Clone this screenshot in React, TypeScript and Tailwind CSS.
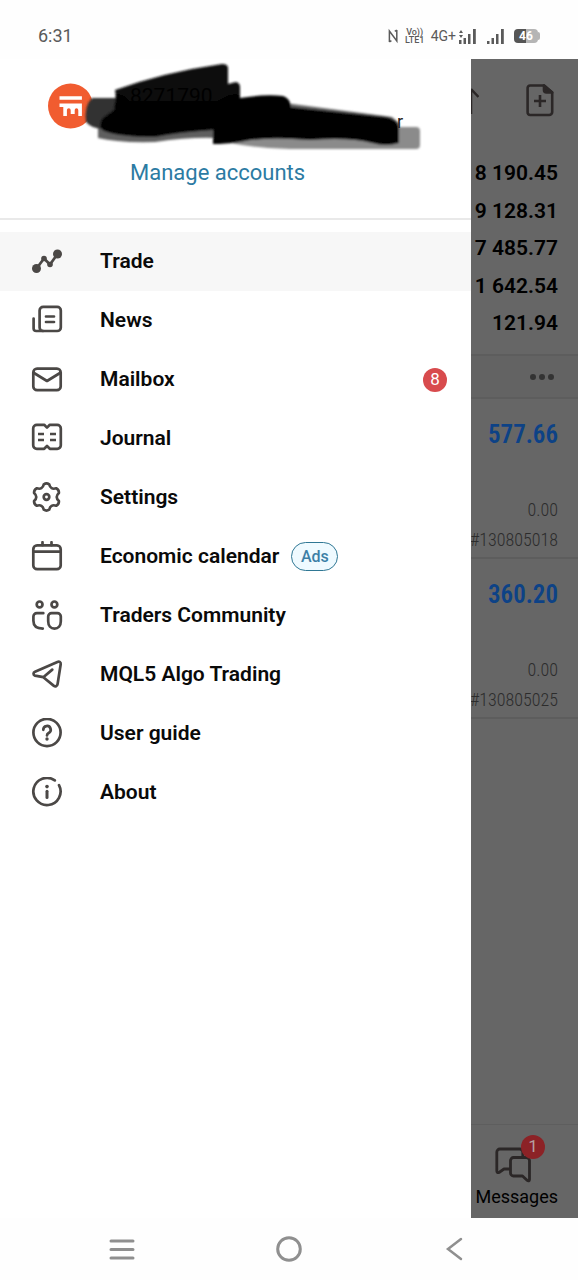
import type { ReactNode } from 'react';

const menu: { label: string; icon: ReactNode; ads?: boolean; badge?: number }[] = [
  {
    label: 'Trade',
    icon: (
      <>
        <path d="M5.5 22.5L13 12.5l6 6L26.5 8" />
        <g fill="currentColor" stroke="none">
          <circle cx="5.5" cy="22.5" r="4.5" />
          <circle cx="13" cy="12.5" r="2.8" />
          <circle cx="19" cy="18.5" r="2.8" />
          <circle cx="26.5" cy="8" r="4.5" />
        </g>
      </>
    ),
  },
  {
    label: 'News',
    icon: (
      <>
        <rect x="8.6" y="1.8" width="21.2" height="24.2" rx="3.6" />
        <path d="M2.6 13.5v10a2.6 2.6 0 0 0 2.6 2.5H12M15 11.5h8M15 17h8" />
      </>
    ),
  },
  {
    label: 'Mailbox',
    badge: 8,
    icon: (
      <>
        <rect x="2.3" y="4.6" width="27.4" height="21.6" rx="3.8" />
        <path d="M3 9l13 8 13-8" />
      </>
    ),
  },
  {
    label: 'Journal',
    icon: (
      <>
        <path d="M5.8 1.8h7.4L16 4.6l2.8-2.8h7.4a3.6 3.6 0 0 1 3.6 3.6v16.8a3.6 3.6 0 0 1-3.6 3.6h-7.4L16 23l-2.8 2.8H5.8a3.6 3.6 0 0 1-3.6-3.6V5.4a3.6 3.6 0 0 1 3.6-3.6z" />
        <path strokeLinecap="butt" d="M7 11h6M7 17h6M19 11h6M19 17h6" />
      </>
    ),
  },
  {
    label: 'Settings',
    icon: (
      <>
        <path d="M12.8 2.3Q15.5.5 18.2 2.3Q19.5 8.1 25.2 6.3Q28.1 7.7 27.9 11Q23.5 15 27.9 19Q28.1 22.3 25.2 23.7Q19.5 21.9 18.2 27.7Q15.5 29.5 12.8 27.7Q11.5 21.9 5.8 23.7Q2.9 22.3 3.1 19Q7.5 15 3.1 11Q2.9 7.7 5.8 6.3Q11.5 8.1 12.8 2.3z" />
        <circle cx="15.5" cy="15" r="2.8" />
      </>
    ),
  },
  {
    label: 'Economic calendar',
    ads: true,
    icon: (
      <>
        <rect x="2.3" y="4.4" width="27.4" height="23.8" rx="3.8" />
        <path d="M2.5 10.6h27M11.5 1.2v3M20.5 1.2v3" />
      </>
    ),
  },
  {
    label: 'Traders Community',
    icon: (
      <>
        <circle cx="8.6" cy="4.4" r="2.9" />
        <circle cx="23.4" cy="4.4" r="2.9" />
        <path d="M12.3 13.2H5.8a3.4 3.4 0 0 0-3.4 3.4v4.2c0 5 3.4 7.8 9.4 7.8" />
        <path d="M20.6 13.2h5.8a3.4 3.4 0 0 1 3.4 3.4v4.6c0 4.6-2.6 7.4-6.3 7.4s-6.3-2.8-6.3-7.4v-4.6a3.4 3.4 0 0 1 3.4-3.4z" />
      </>
    ),
  },
  {
    label: 'MQL5 Algo Trading',
    icon: (
      <path d="M12.3 18.2L4 16.6c-2-.6-2-2.9 0-3.8L26.4 2.9c2-.8 3.6.3 3.3 2.4L26.6 25c-.4 2.4-2.2 3-4 1.6l-10.3-8.4L21.3 10.6" />
    ),
  },
  {
    label: 'User guide',
    icon: (
      <>
        <circle cx="16" cy="14.5" r="13.6" />
        <path d="M12.3 11.8a3.7 3.7 0 1 1 5.4 3.2c-1.2.7-1.7 1.2-1.7 2.4" />
        <circle cx="16" cy="21" r="1.7" fill="currentColor" stroke="none" />
      </>
    ),
  },
  {
    label: 'About',
    icon: (
      <>
        <path d="M23.8 3.4A13.6 13.6 0 1 0 28 8.2" />
        <path d="M16 14.2v6.3" strokeWidth="3" />
        <circle cx="16" cy="9.6" r="1.8" fill="currentColor" stroke="none" />
      </>
    ),
  },
];

const summary = ['8 190.45', '9 128.31', '7 485.77', '1 642.54', '121.94'];

const positions = [
  { profit: '577.66', swap: '0.00', ticket: '#130805018' },
  { profit: '360.20', swap: '0.00', ticket: '#130805025' },
];

function StatusBar() {
  return (
    <div className="flex h-[59px] shrink-0 items-center justify-between px-[38px] pt-3 text-[#5a5a5a]">
      <span className="text-[18px]">6:31</span>
      <div className="flex items-center gap-[6px]">
        <svg className="h-4 w-[11px]" viewBox="0 0 11 16" fill="none" stroke="currentColor" strokeWidth="1.5">
          <path d="M1.4 14V3l7.400 10V2M1.400 14l2-1.400M8.800 2l-2 1.400" />
        </svg>
        <div className="w-[20px] text-center text-[9px] leading-[8px] font-medium">
          <div>Vo))</div>
          <div>LTE1</div>
        </div>
        <span className="text-[14px] leading-5">4G+</span>
        <svg className="-ml-1 h-4 w-[18px]" viewBox="0 0 18 16" fill="currentColor">
          <path d="M1 5l2-3 2 3zM1 7h4l-2 3zM1 12h2.500v4H1zM5.500 10H8v6H5.500zM10 6h2.500v10H10zM15 1h2.800v15H15z" />
        </svg>
        <svg className="ml-1 h-4 w-[18px]" viewBox="0 0 18 16" fill="currentColor">
          <path d="M1 13h2.500v3H1zM5.500 10H8v6H5.500zM10 6h2.500v10H10zM15 1h2.800v15H15z" />
        </svg>
        <div className="ml-1 flex items-center">
          <span className="flex h-[14px] w-6 items-center justify-center rounded-[4px] bg-linear-to-r from-[#555] from-50% to-[#b5b5b5] to-50% text-[12px] font-bold text-white">
            46
          </span>
          <span className="h-2 w-[2px] rounded-r bg-[#b5b5b5]" />
        </div>
      </div>
    </div>
  );
}

function AccountHeader() {
  return (
    <header className="relative h-[161px] border-b-2 border-[#e9e9e9] pt-6 pl-12">
      <div className="flex">
        <svg className="h-[46px] w-[46px] shrink-0" viewBox="0 0 46 46">
          <circle cx="22.500" cy="23" r="22.500" fill="#f15c30" />
          <path
            fill="#fff"
            d="M11.500 13.300h22.400v3.400H11.500zM11.500 20.500h22.400V33h-3.600v-5.500c0-3-3.600-3-3.600 0V31h-4v-3.500c0-3-3.800-3-3.800 0V33h-3.600V24h-3.800z"
          />
        </svg>
        <div className="relative z-10 pl-9 text-[21px] leading-[26px] text-black">
          <p>8271790</p>
          <p className="pl-[267px] text-[18px] text-[#222]">r</p>
        </div>
      </div>
      <svg className="absolute top-0 left-20 h-[95px] w-[345px]" viewBox="80 59 345 95">
        <defs>
          <filter id="soft" x="-5%" y="-5%" width="110%" height="110%">
            <feGaussianBlur stdDeviation="0.9" />
          </filter>
        </defs>
        <g filter="url(#soft)">
          <path fill="#8b8b8b" d="M225 142Q260 149 290 149H416Q420 149 420 145V131Q420 127 416 127H390L250 136z" />
          <path fill="#5f5f5f" d="M98 126V138Q118 143 155 142Q190 137 215 138V118z" />
          <path fill="#303030" d="M92 98Q84 106 86 122Q92 129 104 129L120 124V98z" />
          <path fill="#666" d="M285 103L392 117L400 124L390 130H285z" />
          <path fill="#111" d="M115 90Q165 72 222 64Q228 64 228 68V84L236 82Q240 83 240 87V98L225 110L118 112z" />
          <path
            fill="#050505"
            d="M116 94Q122 92 130 101H216L228 95Q240 92 240 98Q265 94 283 96Q290 98 291 107L386 117Q400 120 399 130V143Q386 147 372 143Q350 137 310 140Q265 136 240 142Q225 144 213 144V130Q180 132 155 137Q120 137 104 131Q98 128 102 119Q108 114 114 110z"
          />
        </g>
      </svg>
      <a href="#accounts" className="mt-6 ml-[82px] inline-block text-[22px] leading-7 text-[#2c7ba3]">
        Manage accounts
      </a>
    </header>
  );
}

function Drawer() {
  return (
    <div className="min-w-0 flex-1 bg-white">
      <AccountHeader />
      <nav className="pt-3">
        {menu.map((item, i) => (
          <a
            key={item.label}
            href="#menu"
            className={`flex h-[59px] items-center pr-6 pl-[31px] ${i === 0 ? 'bg-[#f7f7f7]' : ''}`}
          >
            <svg
              className="h-8 w-8 shrink-0 text-[#4b4846]"
              viewBox="0 0 32 32"
              fill="none"
              stroke="currentColor"
              strokeWidth="2.7"
              strokeLinecap="round"
              strokeLinejoin="round"
            >
              {item.icon}
            </svg>
            <span className="ml-[37px] text-[21px] font-semibold text-[#0a0a0a]">{item.label}</span>
            {item.ads && (
              <span className="ml-3 flex h-[29px] w-[47px] items-center justify-center rounded-full border border-[#2f7794] bg-[#effaff] text-[16px] font-medium text-[#3c7fa6]">
                Ads
              </span>
            )}
            {item.badge && (
              <span className="ml-auto flex h-6 w-6 items-center justify-center rounded-full bg-[#d84b4d] text-[17px] text-white">
                {item.badge}
              </span>
            )}
          </a>
        ))}
      </nav>
    </div>
  );
}

function TradeScreen() {
  return (
    <div className="flex w-[107px] shrink-0 flex-col overflow-hidden bg-[#666] text-right text-black">
      <div className="flex h-24 justify-between pt-6 pr-6">
        <svg className="h-9 w-2" viewBox="0 0 8 36" fill="none" stroke="#2b2727" strokeWidth="2.500">
          <path d="M0 6V31M0 6l7.500 8" />
        </svg>
        <button aria-label="New order" className="h-9 w-[28px]">
          <svg className="h-9 w-[28px]" viewBox="0 0 28 36" fill="none" stroke="#2b2727" strokeWidth="2.600" strokeLinejoin="round">
            <path d="M4.200 2.500H18l8.200 7v19.500a3 3 0 0 1-3 3h-19a2.600 2.600 0 0 1-2.600-3v-23.500a2.600 2.600 0 0 1 2.600-3z" />
            <path d="M18 2.500v4.500a2.500 2.500 0 0 0 2.500 2.500h5.700z" fill="#2b2727" />
            <path d="M8 18h12M14 12v12" />
          </svg>
        </button>
      </div>

      <div className="flex h-[188px] flex-col pr-5 text-[21px] font-semibold whitespace-nowrap">
        {summary.map((value) => (
          <div key={value} className="flex flex-1 items-center justify-end">
            {value}
          </div>
        ))}
      </div>

      <div className="mt-[11px] flex h-[45px] items-center justify-end gap-[3px] border-y-2 border-[#5d5d5d] bg-[#636363] pr-6">
        <span className="h-[6px] w-[6px] rounded-full bg-[#333]" />
        <span className="h-[6px] w-[6px] rounded-full bg-[#333]" />
        <span className="h-[6px] w-[6px] rounded-full bg-[#333]" />
      </div>

      {positions.map((p) => (
        <div
          key={p.ticket}
          className="flex h-40 shrink-0 flex-col items-end border-b-2 border-[#5d5d5d] pt-5 pr-5 font-['Roboto_Condensed','Liberation_Sans_Narrow',Roboto,sans-serif]"
        >
          <div className="text-[25px] leading-8 font-semibold text-[#0d4286]">{p.profit}</div>
          <div className="mt-11 text-[18px] leading-[30px] font-light text-[#2c2c2c]">{p.swap}</div>
          <div className="text-[18px] leading-[30px] font-light text-[#2c2c2c]">{p.ticket}</div>
        </div>
      ))}

      <button className="mt-auto flex h-[94px] flex-col items-end border-t border-[#5e5e5e] pt-[22px] pr-5">
        <span className="relative mr-[27px] block">
          <svg className="h-9 w-9" viewBox="0 0 36 36" fill="none" stroke="#2b2727" strokeWidth="2.800" strokeLinejoin="round">
            <path d="M15 22H9l-5 3.500c-1.200.5-2.200 0-2.200-1.500V5a3 3 0 0 1 3-3h20a3 3 0 0 1 3 3v5" />
            <path d="M18.500 10.500H31.500a3 3 0 0 1 3 3V32.500c0 1.500-1.200 1.800-2.200 1l-4.800-4.500h-9a3 3 0 0 1-3-3V13.500a3 3 0 0 1 3-3z" />
          </svg>
          <span className="absolute -top-3 left-[26px] flex h-6 w-6 items-center justify-center rounded-full bg-[#8c2226] text-[17px] text-[#b5a0a0]">
            1
          </span>
        </span>
        <span className="text-[18px] leading-7">Messages</span>
      </button>
    </div>
  );
}

function SystemNav() {
  return (
    <div className="flex h-[62px] shrink-0 items-center justify-between px-[109px] text-[#8f8f8f]">
      <button aria-label="Recent apps">
        <svg className="h-[26px] w-[26px]" viewBox="0 0 26 26" stroke="currentColor" strokeWidth="3" strokeLinecap="round">
          <path d="M2 5h22M2 13.500h22M2 22h22" />
        </svg>
      </button>
      <button aria-label="Home">
        <svg className="h-[26px] w-[26px]" viewBox="0 0 26 26" fill="none" stroke="currentColor" strokeWidth="3">
          <circle cx="13" cy="13" r="11.300" />
        </svg>
      </button>
      <button aria-label="Back">
        <svg className="h-[26px] w-[26px]" viewBox="0 0 26 26" fill="none" stroke="currentColor" strokeWidth="2.500" strokeLinecap="round">
          <path d="M18 3L5 13l13 10" />
        </svg>
      </button>
    </div>
  );
}

export default function App() {
  return (
    <div className="flex min-h-screen flex-col bg-[#fefefe] font-[Roboto,sans-serif]">
      <StatusBar />
      <main className="flex flex-1">
        <Drawer />
        <TradeScreen />
      </main>
      <SystemNav />
    </div>
  );
}
